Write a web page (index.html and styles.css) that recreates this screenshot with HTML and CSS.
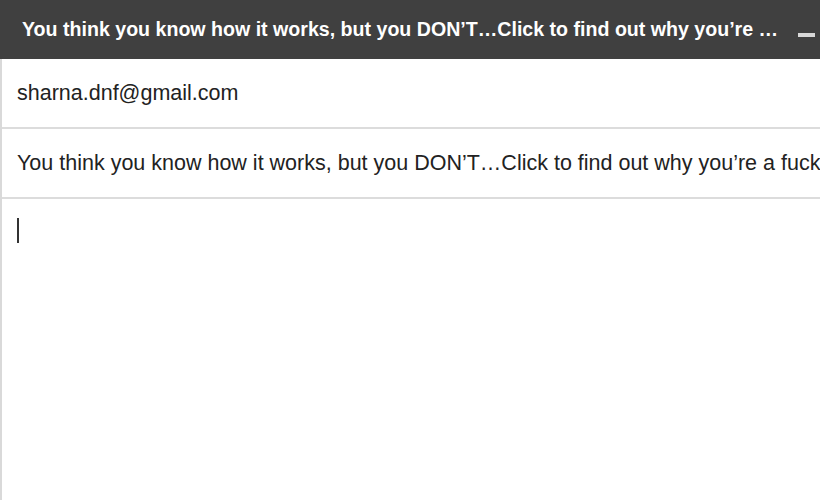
FILE: index.html
```
<!DOCTYPE html>
<html>
<head>
<meta charset="utf-8">
<link rel="stylesheet" href="styles.css">
</head>
<body>
<div class="compose">
  <div class="titlebar">
    <div class="title">You think you know how it works, but you DON’T…Click to find out why you’re …</div>
    <div class="min"></div>
  </div>
  <div class="panel">
    <div class="row">sharna.dnf@gmail.com</div>
    <div class="row">You think you know how it works, but you DON’T…Click to find out why you’re a fucking idiot</div>
    <div class="body"><span class="cursor"></span></div>
  </div>
</div>
</body>
</html>
```
FILE: styles.css
```
html, body {
  margin: 0;
  padding: 0;
  background: #fff;
  overflow: hidden;
}
.compose {
  width: 820px;
  height: 500px;
  font-family: "Liberation Sans", Arial, sans-serif;
  display: flex;
  flex-direction: column;
}
.titlebar {
  height: 59px;
  flex: none;
  background: #404040;
  display: flex;
  align-items: center;
  padding-left: 22px;
  box-sizing: border-box;
}
.title {
  color: #fff;
  font-weight: bold;
  font-size: 19.6px;
  white-space: nowrap;
  flex: none;
  margin-top: -1px;
}
.min {
  width: 17px;
  height: 4px;
  background: #d8d8d8;
  margin: 10px 5px 0 auto;
  flex: none;
}
.panel {
  flex: 1;
  border-left: 2px solid #d9d9d9;
  display: flex;
  flex-direction: column;
}
.row {
  height: 68px;
  border-bottom: 2px solid #dcdcdc;
  display: flex;
  align-items: center;
  padding-left: 15px;
  font-size: 21.5px;
  color: #222;
  white-space: nowrap;
  overflow: hidden;
  flex: none;
}
.body {
  flex: 1;
  padding: 19px 0 0 15px;
}
.cursor {
  display: block;
  width: 2px;
  height: 25px;
  background: #333;
}
```
